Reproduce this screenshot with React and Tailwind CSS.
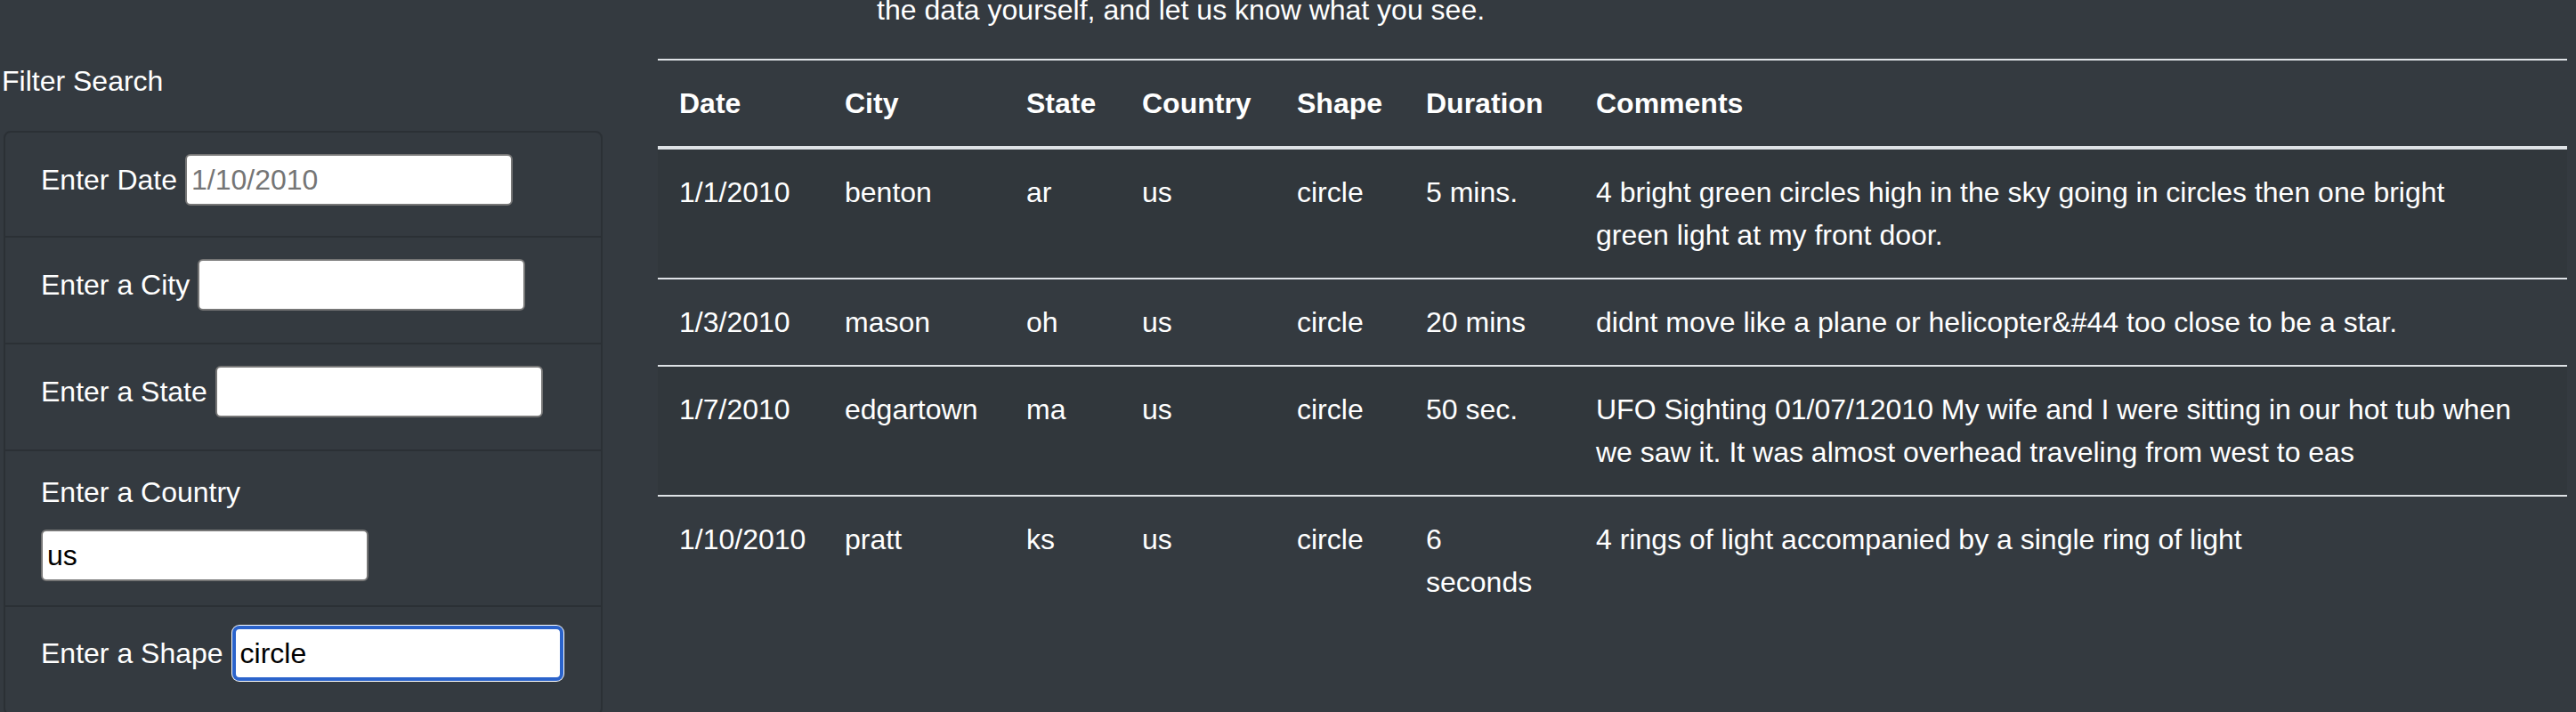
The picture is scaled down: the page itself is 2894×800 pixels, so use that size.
import React from "react";

const rows = [
  { date: "1/1/2010", city: "benton", state: "ar", country: "us", shape: "circle", duration: "5 mins.", comments: "4 bright green circles high in the sky going in circles then one bright green light at my front door." },
  { date: "1/3/2010", city: "mason", state: "oh", country: "us", shape: "circle", duration: "20 mins", comments: "didnt move like a plane or helicopter&#44 too close to be a star." },
  { date: "1/7/2010", city: "edgartown", state: "ma", country: "us", shape: "circle", duration: "50 sec.", comments: "UFO Sighting 01/07/12010 My wife and I were sitting in our hot tub when we saw it. It was almost overhead traveling from west to eas" },
  { date: "1/10/2010", city: "pratt", state: "ks", country: "us", shape: "circle", duration: "6 seconds", comments: "4 rings of light accompanied by a single ring of light" },
];

const inputBase =
  "w-[368px] h-[58px] shrink-0 bg-white text-black text-[32px] px-[5px] rounded-[6px] outline-none placeholder:text-[#757575] font-['Liberation_Sans',Arial,sans-serif]";

function Th({ w, children }) {
  return (
    <th className={`${w} px-[24px] py-[24px] text-left align-top font-bold leading-[48px] border-t-2 border-b-4 border-[#dee2e6]`}>
      {children}
    </th>
  );
}

export default function App() {
  return (
    <div className="min-h-[800px] w-full bg-[#343a40] text-white text-[32px] leading-[48px] font-['Liberation_Sans',Arial,sans-serif] overflow-hidden">
      <p className="-mt-[13px] mb-[31px] pl-[985px] whitespace-nowrap">the data yourself, and let us know what you see.</p>
      <div className="flex items-start">
        <div className="w-[739px] shrink-0">
          <h2 className="pl-[2px] mt-px mb-[32px] text-[32px] leading-[48px] font-normal">Filter Search</h2>
          <div className="ml-[4px] w-[673px] border-2 border-[#2b3035] rounded-[8px] divide-y-2 divide-[#2b3035]">
            <div className="h-[118px] px-[40px] pb-[10px] flex items-center gap-[9px]">
              <label>Enter Date</label>
              <input className={`${inputBase} border-2 border-[#767676]`} placeholder="1/10/2010" />
            </div>
            <div className="h-[120px] px-[40px] pb-[12px] flex items-center gap-[9px]">
              <label>Enter a City</label>
              <input className={`${inputBase} border-2 border-[#767676]`} />
            </div>
            <div className="h-[120px] px-[40px] pb-[12px] flex items-center gap-[9px]">
              <label>Enter a State</label>
              <input className={`${inputBase} border-2 border-[#767676]`} />
            </div>
            <div className="h-[175px] px-[40px] pt-[22px]">
              <label className="block">Enter a Country</label>
              <input className={`${inputBase} mt-[18px] border-2 border-[#767676] block`} defaultValue="us" />
            </div>
            <div className="h-[120px] px-[40px] pb-[16px] flex items-center gap-[9px]">
              <label>Enter a Shape</label>
              <input
                className={`${inputBase} ml-[3px] border-2 border-[#2b63cb] shadow-[0_0_0_2px_#2b63cb,0_0_0_3px_#ffffff]`}
                defaultValue="circle"
              />
            </div>
          </div>
        </div>
        <div className="w-[2145px] shrink-0">
          <table className="w-[2145px] table-fixed border-separate border-spacing-0">
            <thead>
              <tr>
                <Th w="w-[186px]">Date</Th>
                <Th w="w-[204px]">City</Th>
                <Th w="w-[130px]">State</Th>
                <Th w="w-[174px]">Country</Th>
                <Th w="w-[145px]">Shape</Th>
                <Th w="w-[191px]">Duration</Th>
                <Th w="w-[1115px]">Comments</Th>
              </tr>
            </thead>
            <tbody>
              {rows.map((r, i) => {
                const cell = `px-[24px] py-[24px] text-left align-top leading-[48px] border-[#dee2e6] ${i === 0 ? "border-t-0" : "border-t-2"}`;
                return (
                  <tr key={i} className={i % 2 === 0 ? "bg-black/5" : ""}>
                    <td className={cell}>{r.date}</td>
                    <td className={cell}>{r.city}</td>
                    <td className={cell}>{r.state}</td>
                    <td className={cell}>{r.country}</td>
                    <td className={cell}>{r.shape}</td>
                    <td className={cell}>{r.duration}</td>
                    <td className={`${cell} pr-[55px]`}>{r.comments}</td>
                  </tr>
                );
              })}
            </tbody>
          </table>
        </div>
      </div>
    </div>
  );
}
